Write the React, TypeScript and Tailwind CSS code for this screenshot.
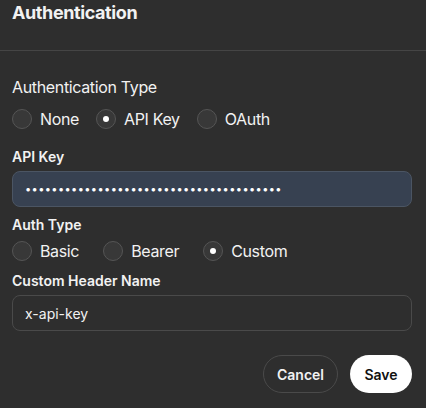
import { useState } from 'react'

function Radio({ label, checked, onClick }: { label: string; checked: boolean; onClick: () => void }) {
  return (
    <button type="button" onClick={onClick} className="flex items-center gap-2 text-[16px] leading-5 tracking-[-0.35px] text-[#f2f2f2]">
      <span className="flex h-5 w-5 items-center justify-center rounded-full border border-[#555555] bg-[#383838]">
        {checked && <span className="h-1.5 w-1.5 rounded-full bg-white" />}
      </span>
      {label}
    </button>
  )
}

export default function App() {
  const [authType, setAuthType] = useState('apikey')
  const [scheme, setScheme] = useState('custom')
  const [header, setHeader] = useState('x-api-key')

  return (
    <div className="h-[408px] w-[426px] overflow-hidden bg-[#2e2e2e] text-[#f2f2f2]" style={{ fontFamily: 'Inter, "Noto Sans", sans-serif' }}>
      <div className="h-[51px] border-b border-[#454545] pl-3 pt-px">
        <h2 className="text-[18px] font-bold leading-6 tracking-[-0.4px]">Authentication</h2>
      </div>

      <div className="flex flex-col pl-3 pr-[14px] pt-6">
        <p className="text-[16px] leading-6 tracking-[-0.35px]">Authentication Type</p>
        <div className="mt-2.5 flex gap-[17px]">
          <Radio label="None" checked={authType === 'none'} onClick={() => setAuthType('none')} />
          <Radio label="API Key" checked={authType === 'apikey'} onClick={() => setAuthType('apikey')} />
          <Radio label="OAuth" checked={authType === 'oauth'} onClick={() => setAuthType('oauth')} />
        </div>

        <label className="mt-[18px] text-[14px] font-semibold leading-5">API Key</label>
        <input
          readOnly
          value={'\u2022'.repeat(39)}
          className="mt-1 h-9 rounded-lg border border-[#4b5563] bg-[#374151] px-3 text-[11px] tracking-[0.4px] text-white outline-none"
        />

        <label className="mt-2 text-[14px] font-semibold leading-5">Auth Type</label>
        <div className="mt-1.5 flex gap-6">
          <Radio label="Basic" checked={scheme === 'basic'} onClick={() => setScheme('basic')} />
          <Radio label="Bearer" checked={scheme === 'bearer'} onClick={() => setScheme('bearer')} />
          <Radio label="Custom" checked={scheme === 'custom'} onClick={() => setScheme('custom')} />
        </div>

        <label className="mt-2.5 text-[14px] font-semibold leading-5">Custom Header Name</label>
        <input
          value={header}
          onChange={e => setHeader(e.target.value)}
          className="mt-1 h-9 rounded-lg border border-[#4a4a4a] bg-transparent px-3 text-[14px] text-[#f2f2f2] outline-none"
        />

        <div className="mt-6 flex justify-end gap-3">
          <button className="h-[38px] w-[75px] rounded-full border border-[#4a4a4a] text-[14px] font-semibold text-[#f2f2f2]">
            Cancel
          </button>
          <button className="h-[38px] w-[62px] rounded-full bg-white text-[14px] font-semibold text-[#111111]">
            Save
          </button>
        </div>
      </div>
    </div>
  )
}
